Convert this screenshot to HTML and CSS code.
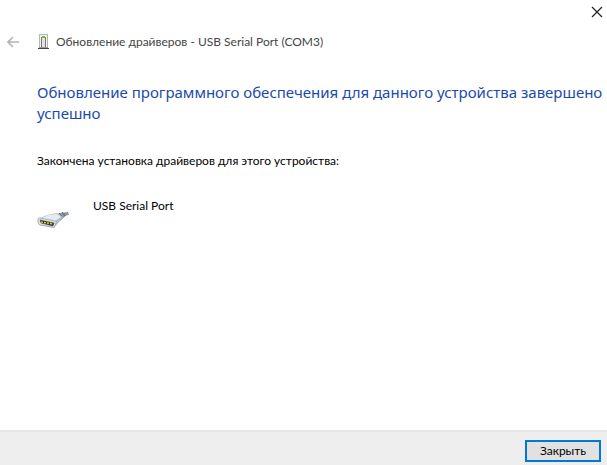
FILE: index.html
```html
<!DOCTYPE html>
<html lang="ru">
<head>
    <meta charset="UTF-8">
    <meta name="viewport" content="width=device-width, initial-scale=1.0">
    <title>Обновление драйверов</title>
    <link rel="stylesheet" href="styles.css">
</head>
<body>
    <div class="titlebar">
        <button type="button" class="icon-button" aria-label="Закрыть окно">
            <svg width="12" height="12" viewBox="0 0 12 12">
                <path d="M1 1L11 11M11 1L1 11" stroke="#222" stroke-width="1.2" fill="none"/>
            </svg>
        </button>
    </div>

    <header class="wizard-header">
        <button type="button" class="icon-button" aria-label="Назад" disabled>
            <svg width="12" height="12" viewBox="0 0 12 12">
                <path d="M12 6H1M6 1L1 6L6 11" stroke="#b4b4b4" stroke-width="1.6" fill="none"/>
            </svg>
        </button>
        <svg class="device-icon" width="12" height="16" viewBox="0 0 12 16">
            <rect x="1.5" y="0.5" width="8" height="13" fill="#f4f4f4" stroke="#b5b5b5"/>
            <rect x="3" y="3" width="1" height="10" fill="#777"/>
            <rect x="4" y="2" width="3" height="11" fill="#e2e2e2"/>
            <rect x="7" y="3" width="1" height="10" fill="#777"/>
            <rect x="4" y="2" width="3" height="2" fill="#6cc62c"/>
            <rect x="1" y="13" width="9" height="1" fill="#999"/>
            <rect x="0" y="14" width="11" height="1" fill="#444"/>
        </svg>
        <span class="wizard-title">Обновление драйверов - USB Serial Port (COM3)</span>
    </header>

    <main class="content">
        <h1>Обновление программного обеспечения для данного устройства завершено успешно</h1>
        <p>Закончена установка драйверов для этого устройства:</p>
        <div class="device">
            <svg width="32" height="32" viewBox="0 -1 32 32">
                <path d="M19 17C22 13 25 14 31 13L32 16C28 16 27 19 23 22Z" fill="#8997a1"/>
                <path d="M22 14L25 18M25 13L28 17" stroke="#56646e" stroke-width="1"/>
                <path d="M1 20L10 16L20 14L26 18L22 23L17 29L2 26Z" fill="#b4bec5"/>
                <path d="M3 20L11 16L20 15L24 18L18 22Z" fill="#e6ebee"/>
                <path d="M1 20Q1 19 3 19L18 22Q20 22 19 24L18 27Q17 29 15 28L3 26Q1 25 1 23Z" fill="#dfe3e6" stroke="#929ba1" stroke-width="0.7"/>
                <path d="M3 21L17 24L16 27L4 24Z" fill="#30301c" stroke="#444" stroke-width="0.5"/>
                <path d="M4 23L16 25" stroke="#d2d04a" stroke-width="1.4" stroke-dasharray="2 1"/>
            </svg>
            <span>USB Serial Port</span>
        </div>
    </main>

    <footer class="footer">
        <button type="button" class="close-button">Закрыть</button>
    </footer>
</body>
</html>
```
FILE: styles.css
```css
/* General Styles */
body {
    display: flex;
    flex-direction: column;
    min-height: 100vh;
    margin: 0;
    background-color: #fff;
    color: #000;
    font-family: Lato, 'Noto Sans', sans-serif;
    font-size: 12px;
    line-height: 16px;
}

button {
    font: inherit;
    cursor: pointer;
}

.icon-button {
    display: flex;
    padding: 0;
    border: none;
    background: none;
}

/* Window chrome */
.titlebar {
    display: flex;
    justify-content: flex-end;
    padding: 6px 4px;
}

.wizard-header {
    display: flex;
    align-items: center;
    padding: 10px 7px;
}

.device-icon {
    margin: 0 6px 0 19px;
}

.wizard-title {
    color: #444;
}

/* Wizard page */
.content {
    flex: 1;
    padding: 22px 0 0 37px;
}

h1 {
    margin: 0;
    color: #1a4bab;
    font-family: 'Noto Sans', 'Open Sans', sans-serif;
    font-size: 15px;
    font-weight: normal;
    line-height: 21px;
}

p {
    margin: 29px 0;
}

.device {
    display: flex;
    gap: 24px;
}

/* Footer */
.footer {
    display: flex;
    justify-content: flex-end;
    padding: 8px 6px 3px;
    border-top: 2px solid #e6e6e6;
    background-color: #eee;
}

.close-button {
    width: 76px;
    height: 22px;
    padding: 0;
    border: 2px solid #0078d7;
    background-color: #e1e1e1;
    line-height: 18px;
}
```
